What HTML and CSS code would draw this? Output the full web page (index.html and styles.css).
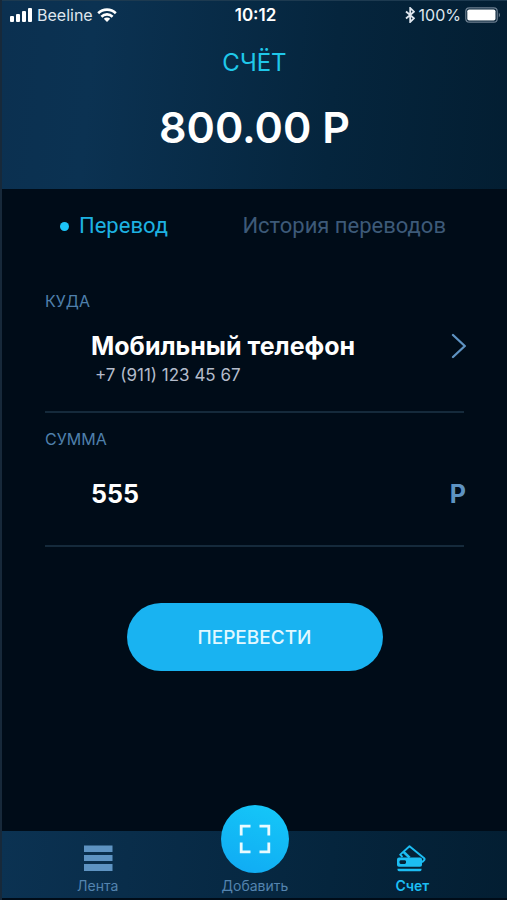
FILE: index.html
```html
<!DOCTYPE html>
<html lang="ru">
<head>
<meta charset="utf-8">
<meta name="viewport" content="width=device-width, initial-scale=1">
<title>Счёт</title>
<link rel="stylesheet" href="styles.css">
</head>
<body>
<div class="app">
  <header class="header">
    <div class="status">
      <div class="status-side">
        <svg class="signal" viewBox="0 0 23 14" aria-hidden="true"><rect x="0" y="8" width="4" height="6" rx="1"/><rect x="6" y="6" width="4" height="8" rx="1"/><rect x="12" y="3" width="4" height="11" rx="1"/><rect x="18" y="0" width="4" height="14" rx="1"/></svg>
        <span>Beeline</span>
        <svg class="wifi" viewBox="0 0 20 14" aria-hidden="true"><g fill="none" stroke="#fff" stroke-width="2.6"><path d="M1.2 5.2a12.6 12.6 0 0 1 17.6 0"/><path d="M4.4 8.7a8 8 0 0 1 11.2 0"/></g><path d="M10 14 6.8 10.8a4.6 4.6 0 0 1 6.4 0Z"/></svg>
      </div>
      <time class="clock">10:12</time>
      <div class="status-side status-end">
        <svg class="bluetooth" viewBox="0 0 10 16" aria-hidden="true"><path d="M1 4.5 9 11.3 5.2 15V1L9 4.7 1 11.5" fill="none" stroke="#dfe6ee" stroke-width="1.8"/></svg>
        <span>100%</span>
        <svg class="battery" viewBox="0 0 36 16" aria-hidden="true"><rect x=".8" y=".8" width="31.4" height="14.4" rx="3.5" fill="none" stroke="#6d7f90" stroke-width="1.2"/><rect x="2.3" y="2.4" width="28.2" height="11.2" rx="1.8"/><path d="M33.8 5.5q2.4 2.5 0 5Z" fill="#6d7f90"/></svg>
      </div>
    </div>
    <h1 class="title">СЧЁТ</h1>
    <p class="balance">800.00 Р</p>
  </header>

  <main class="content">
    <nav class="tabs">
      <a class="tab tab-active" href="#transfer">Перевод</a>
      <a class="tab" href="#history">История переводов</a>
    </nav>
    <form class="form" id="transfer">
      <section class="field">
        <h2 class="label">КУДА</h2>
        <button class="target" type="button">
          <span class="target-text">
            <span class="target-name">Мобильный телефон</span>
            <span class="target-phone">+7 (911) 123 45 67</span>
          </span>
          <svg class="chevron" viewBox="0 0 16 26" aria-hidden="true"><path d="M3 2 14.8 13 3 24" fill="none" stroke="#5e93c2" stroke-width="2.3" stroke-linecap="round" stroke-linejoin="round"/></svg>
        </button>
      </section>
      <section class="field">
        <label class="label" for="amount">СУММА</label>
        <div class="amount-row">
          <input class="amount" id="amount" type="text" inputmode="decimal" value="555">
          <span class="currency">Р</span>
        </div>
      </section>
      <button class="submit" type="submit">ПЕРЕВЕСТИ</button>
    </form>
  </main>

  <nav class="bar">
    <a class="bar-item" href="#feed">
      <svg class="bar-icon" viewBox="0 0 32 28" aria-hidden="true"><path fill="#5e93c2" d="M2 .5h28.500V7H2zM2 10h28.500v6H2zM2 19h28.500v7H2z"/></svg>
      Лента
    </a>
    <a class="bar-item" href="#add">
      <span class="scan"><svg class="scan-icon" viewBox="0 0 32 30" aria-hidden="true"><path d="M2.2 11.5V2.2H11.500M20.500 2.2h9.300v9.300M29.800 18.500v9.300h-9.300M11.500 27.800H2.200v-9.300" fill="none" stroke="#e9fbff" stroke-width="2.8"/></svg></span>
      Добавить
    </a>
    <a class="bar-item bar-active" href="#account">
      <svg class="bar-icon" viewBox="0 0 32 28" aria-hidden="true"><g fill="none" stroke="#1cbdf3" stroke-width="1.9" stroke-linejoin="round"><path d="M6.500 12 4.200 9.600 13.500 1.200 28.200 13.200q1 1-.4 2.300L26 17.400"/><path stroke-width="2.6" d="m7.400 6.800 6.200 5.800"/></g><path fill="#1cbdf3" fill-rule="evenodd" d="M3 12.500h21q2 0 2 2v5.500q0 1.800-2 1.800H3q-2 0-2-1.800V14.500q0-2 2-2Zm1.500 2.700-1 .8v2l1 .9h4.500l1-.9v-2l-1-.8ZM1.500 23.800h24v1q0 1.400-1.500 1.400h-21q-1.500 0-1.500-1.400Z"/></svg>
      Счет
    </a>
  </nav>
</div>
</body>
</html>
```
FILE: styles.css
```css
* {
  box-sizing: border-box;
}

body {
  margin: 0;
  background: #000c18;
  color: #fff;
  font-family: Inter, "Liberation Sans", sans-serif;
}

h1, h2, p {
  margin: 0;
  font-weight: 400;
}

a {
  color: inherit;
  text-decoration: none;
}

button, input {
  border: 0;
  padding: 0;
  background: none;
  color: inherit;
  font: inherit;
}

svg {
  display: block;
  flex: none;
  fill: #fff;
}

.app {
  display: flex;
  flex-direction: column;
  min-height: 100vh;
  border-left: 2px solid #17293a;
  padding-bottom: 2px;
}

.header {
  padding-bottom: 36px;
  border-top: 1px solid #1d3a50;
  background: linear-gradient(95deg, #0b3050 0%, #0b3252 18%, #05253d 65%, #031e32 100%);
  text-align: center;
}

.status {
  display: grid;
  grid-template-columns: 1fr auto 1fr;
  align-items: center;
  height: 28px;
  padding: 0 6px 0 8px;
  font-size: 16px;
  color: #dfe6ee;
}

.status-side {
  display: flex;
  align-items: center;
  gap: 4px;
}

.status-end {
  justify-content: flex-end;
}

.clock {
  font-size: 17px;
  font-weight: 600;
  color: #fff;
}

.signal {
  width: 23px;
  height: 14px;
}

.wifi {
  width: 20px;
  height: 14px;
}

.bluetooth {
  width: 10px;
  height: 16px;
}

.battery {
  width: 36px;
  height: 16px;
}

.title {
  margin-top: 16px;
  font-size: 24px;
  line-height: 36px;
  color: #1fc8ea;
}

.balance {
  margin-top: 20px;
  font-size: 43px;
  line-height: 52px;
  font-weight: 600;
}

.content {
  flex: 1;
  padding: 21px 43px 0;
}

.tabs {
  display: flex;
  justify-content: space-between;
  padding: 0 18px 0 15px;
  font-family: Roboto, sans-serif;
  font-size: 22px;
  line-height: 32px;
  color: #3d5a78;
}

.tab-active {
  display: flex;
  align-items: center;
  gap: 10px;
  color: #1db2e2;
}

.tab-active::before {
  content: "";
  width: 9px;
  height: 9px;
  border-radius: 50%;
  background: #1cc4f7;
}

.form {
  display: flex;
  flex-direction: column;
  padding-top: 47px;
}

.field {
  border-bottom: 2px solid #152a3b;
}

.field + .field {
  padding-top: 14px;
}

.label {
  display: block;
  font-size: 16px;
  line-height: 24px;
  color: #4f80ac;
}

.target {
  display: flex;
  justify-content: space-between;
  align-items: flex-start;
  width: calc(100% + 2px);
  padding: 18px 0 22px 46px;
  text-align: left;
}

.target-name, .target-phone {
  display: block;
}

.target-name {
  font-size: 25px;
  line-height: 30px;
  font-weight: 700;
}

.target-phone {
  padding-left: 4px;
  font-size: 17px;
  line-height: 28px;
  color: #b4bccb;
}

.chevron {
  width: 16px;
  height: 26px;
  margin-top: 2px;
}

.amount-row {
  display: flex;
  align-items: center;
  width: calc(100% + 2px);
  padding: 28px 0 36px 46px;
  font-size: 25px;
  line-height: 30px;
  font-weight: 700;
}

.amount {
  flex: 1;
  min-width: 0;
  height: 30px;
}

.currency {
  color: #5e93c2;
}

.submit {
  align-self: center;
  width: 256px;
  height: 68px;
  margin-top: 56px;
  border-radius: 34px;
  background: #19b3f1;
  font-size: 19px;
  font-weight: 500;
  color: #e2f8ff;
}

.bar {
  display: grid;
  grid-template-columns: repeat(3, 1fr);
  grid-template-rows: 100%;
  height: 67px;
  padding: 0 16px 0 17px;
  background: linear-gradient(95deg, #0b3252 0%, #092d4a 25%, #05253d 65%, #031e32 100%);
  font-size: 14px;
  line-height: 18px;
  color: #5484af;
}

.bar-item {
  display: flex;
  flex-direction: column;
  justify-content: flex-end;
  align-items: center;
  gap: 4px;
  padding-bottom: 3px;
}

.bar-icon {
  width: 32px;
  height: 28px;
}

.bar-active {
  font-weight: 600;
  color: #1cbdf3;
}

.scan {
  display: grid;
  place-items: center;
  flex: none;
  width: 68px;
  height: 68px;
  border-radius: 50%;
  background: linear-gradient(200deg, #15c9f8, #10a9f3);
}

.scan-icon {
  width: 32px;
  height: 30px;
}
```
